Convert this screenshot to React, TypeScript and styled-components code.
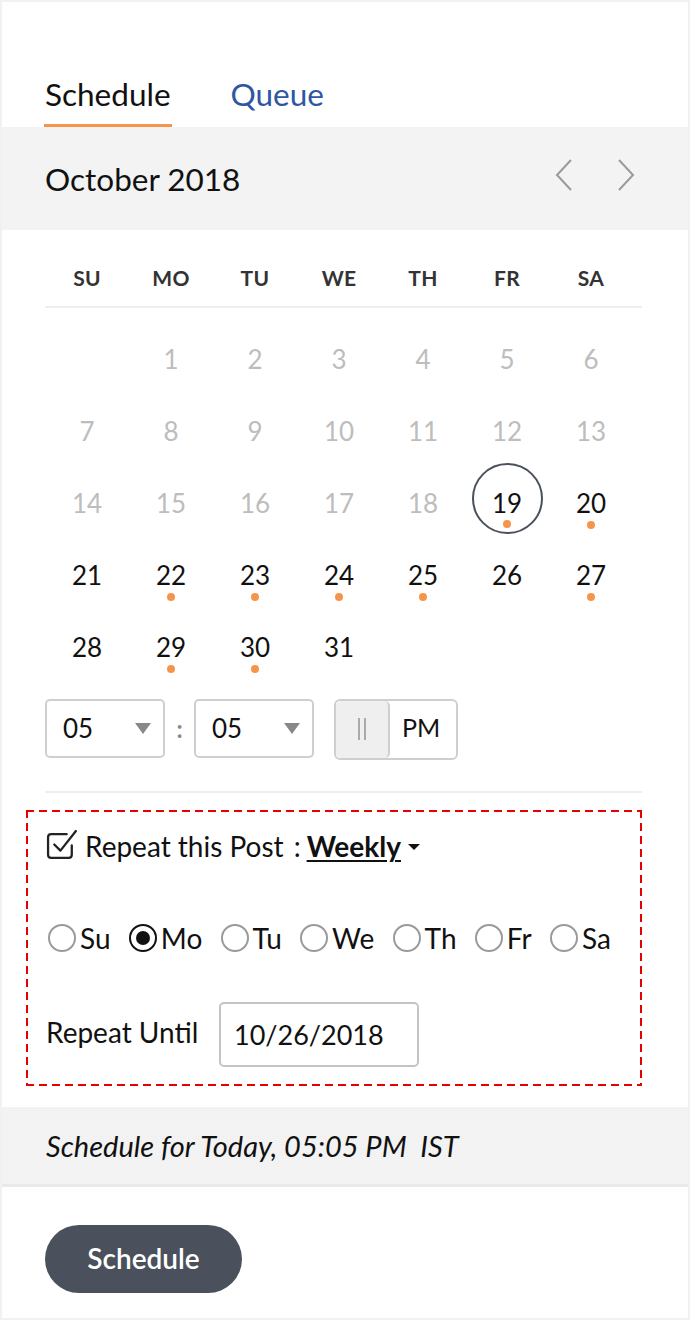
import React from "react";
import styled, { createGlobalStyle } from "styled-components";

const Global = createGlobalStyle`
  html, body { margin: 0; padding: 0; background: #fff; }
  body { font-family: Lato, "Open Sans", sans-serif; color: #111; }
  * { box-sizing: border-box; }
`;

const Frame = styled.div`
  width: 690px;
  height: 1320px;
  border: 2px solid #f1f1f1;
  background: #fff;
  display: flex;
  flex-direction: column;
`;

const Tabs = styled.div`
  display: flex;
  gap: 60px;
  padding: 74px 0 0 43px;
  height: 125px;
`;

const Tab = styled.div<{ $active?: boolean }>`
  font-size: 31.5px;
  line-height: 36px;
  color: ${(p) => (p.$active ? "#111" : "#2f56a3")};
  position: relative;
  height: 51px;
  &::after {
    content: "";
    display: ${(p) => (p.$active ? "block" : "none")};
    position: absolute;
    left: -1px;
    right: -1px;
    bottom: 0;
    height: 3px;
    background: #f4954b;
  }
`;

const MonthBar = styled.div`
  background: #f3f3f3;
  height: 103px;
  display: flex;
  align-items: center;
  justify-content: space-between;
  padding: 0 52px 0 43px;
`;

const MonthTitle = styled.div`
  font-size: 31.5px;
  color: #111;
`;

const Arrows = styled.div`
  display: flex;
  gap: 42px;
  align-items: center;
  padding-bottom: 8px;
`;

const Body = styled.div`
  padding: 0 46px 0 43px;
`;

const Grid = styled.div`
  display: grid;
  grid-template-columns: repeat(7, 84px);
`;

const HeadRow = styled(Grid)`
  height: 78px;
  align-items: end;
  padding-bottom: 16px;
  border-bottom: 2px solid #eeeeee;
  width: 597px;
`;

const HeadCell = styled.div`
  text-align: center;
  font-weight: 700;
  font-size: 21px;
  color: #333;
  letter-spacing: 0.3px;
`;

const DaysGrid = styled(Grid)`
  grid-auto-rows: 72px;
  padding-top: 16px;
`;

const DayCell = styled.div`
  display: flex;
  align-items: center;
  justify-content: center;
  position: relative;
`;

const DayNum = styled.div<{ $muted?: boolean; $today?: boolean }>`
  font-size: 26px;
  color: ${(p) => (p.$muted ? "#bdbdbd" : "#111")};
  width: 71px;
  height: 71px;
  border-radius: 50%;
  display: flex;
  align-items: center;
  justify-content: center;
  border: ${(p) => (p.$today ? "2px solid #4a505c" : "2px solid transparent")};
  position: relative;
  padding-bottom: 2px;
  margin-top: ${(p) => (p.$today ? "-12px" : "0")};
  ${(p) => (p.$today ? "& > span { margin-top: 12px; }" : "")}
`;

const Dot = styled.span<{ $today?: boolean }>`
  position: absolute;
  left: 50%;
  top: ${(p) => (p.$today ? "52px" : "53px")};
  width: 8px;
  height: 8px;
  margin-left: -4px;
  border-radius: 50%;
  background: #f4954b;
`;

const TimeRow = styled.div`
  display: flex;
  align-items: center;
  margin-top: 13px;
  height: 62px;
`;

const Select = styled.div`
  width: 120px;
  height: 59px;
  border: 2px solid #cfcfcf;
  border-radius: 5px;
  display: flex;
  align-items: center;
  justify-content: space-between;
  padding: 0 12px 0 16px;
  font-size: 26px;
  color: #111;
`;

const Caret = styled.span`
  width: 0;
  height: 0;
  border-left: 8px solid transparent;
  border-right: 8px solid transparent;
  border-top: 11px solid #888;
`;

const Colon = styled.span`
  width: 29px;
  text-align: center;
  font-size: 24px;
  color: #888;
  font-weight: 700;
`;

const Toggle = styled.div`
  margin-left: 20px;
  width: 124px;
  height: 61px;
  border: 2px solid #cfcfcf;
  border-radius: 6px;
  display: flex;
  overflow: hidden;
  margin-top: 2px;
`;

const Knob = styled.div`
  width: 54px;
  background: #efefef;
  border-right: 2px solid #cfcfcf;
  border-radius: 5px;
  display: flex;
  align-items: center;
  justify-content: center;
  gap: 4px;
  & > i {
    display: block;
    width: 2px;
    height: 22px;
    background: #aaa;
  }
`;

const PMLabel = styled.div`
  flex: 1;
  display: flex;
  align-items: center;
  justify-content: center;
  font-size: 25px;
  color: #111;
  padding: 0 4px 4px 0;
`;

const Divider = styled.div`
  height: 2px;
  background: #eeeeee;
  width: 597px;
  margin-top: 32px;
`;

const RepeatBox = styled.div`
  margin: 17px 0 0 -19px;
  width: 616px;
  height: 276px;
  padding: 18px 0 0 20px;
  display: flex;
  flex-direction: column;
  background-image:
    repeating-linear-gradient(90deg, #e60000 0 8px, transparent 8px 13px),
    repeating-linear-gradient(90deg, #e60000 0 8px, transparent 8px 13px),
    repeating-linear-gradient(180deg, #e60000 0 8px, transparent 8px 13px),
    repeating-linear-gradient(180deg, #e60000 0 8px, transparent 8px 13px);
  background-size: 100% 2px, 100% 2px, 2px 100%, 2px 100%;
  background-position: 0 0, 0 100%, 0 0, 100% 0;
  background-repeat: no-repeat;
`;

const RepeatHead = styled.div`
  display: flex;
  align-items: center;
  font-size: 28px;
  color: #111;
  height: 36px;
`;

const ColonText = styled.span`
  margin-left: 10px;
`;

const Weekly = styled.span`
  font-weight: 700;
  text-decoration: underline;
  text-underline-offset: 3px;
  text-decoration-thickness: 2px;
  margin-left: 6px;
`;

const SmallCaret = styled.span`
  width: 0;
  height: 0;
  border-left: 6px solid transparent;
  border-right: 6px solid transparent;
  border-top: 6px solid #111;
  margin-left: 7px;
  margin-top: 2px;
`;

const RadioRow = styled.div`
  display: flex;
  align-items: center;
  gap: 18.3px;
  margin-top: 56px;
  height: 36px;
  margin-left: 2px;
`;

const RadioItem = styled.label`
  display: flex;
  align-items: center;
  font-size: 28px;
  color: #111;
`;

const RadioCircle = styled.span<{ $on?: boolean }>`
  width: 28px;
  height: 28px;
  border-radius: 50%;
  border: 2px solid ${(p) => (p.$on ? "#111" : "#9a9a9a")};
  margin-right: 4px;
  display: flex;
  align-items: center;
  justify-content: center;
  &::after {
    content: "";
    display: ${(p) => (p.$on ? "block" : "none")};
    width: 14px;
    height: 14px;
    border-radius: 50%;
    background: #111;
  }
`;

const UntilRow = styled.div`
  display: flex;
  align-items: center;
  margin-top: 46px;
`;

const UntilLabel = styled.div`
  font-size: 28px;
  color: #111;
  width: 173px;
  padding-bottom: 6px;
`;

const DateInput = styled.div`
  width: 200px;
  height: 65px;
  border: 2px solid #c4c4c4;
  border-radius: 5px;
  display: flex;
  align-items: center;
  padding-left: 13px;
  font-size: 27px;
  color: #111;
`;

const Summary = styled.div`
  margin-top: 21px;
  height: 80px;
  background: repeating-linear-gradient(0deg, #f4f4f4 0px, #f4f4f4 1px, #f1f1f1 1px, #f1f1f1 2px);
  border-bottom: 3px solid #e9e9e9;
  display: flex;
  align-items: center;
  padding-left: 44px;
  font-style: italic;
  font-size: 29px;
  color: #111;
  white-space: pre;
`;

const Footer = styled.div`
  padding: 38px 0 0 43px;
`;

const Button = styled.button`
  width: 197px;
  height: 68px;
  border-radius: 34px;
  border: 0;
  background: #4a515c;
  color: #fff;
  font-family: Lato, "Open Sans", sans-serif;
  font-size: 28px;
  font-weight: 600;
  padding-bottom: 3px;
`;

const days = ["SU", "MO", "TU", "WE", "TH", "FR", "SA"];
const dotted = new Set([19, 20, 22, 23, 24, 25, 27, 29, 30]);

const Chevron = ({ dir }: { dir: "l" | "r" }) => (
  <svg width="20" height="34" viewBox="0 0 20 34">
    <path
      d={dir === "l" ? "M17 2 L3 17 L17 32" : "M3 2 L17 17 L3 32"}
      fill="none"
      stroke="#9a9a9a"
      strokeWidth="2"
    />
  </svg>
);

const CheckIcon = () => (
  <svg width="33" height="33" viewBox="0 0 32 32" style={{ marginRight: 6, marginTop: -2 }}>
    <path
      d="M25 16 V25 Q25 28 22 28 H5 Q2 28 2 25 V8 Q2 5 5 5 H20"
      fill="none"
      stroke="#222"
      strokeWidth="2.2"
      strokeLinecap="round"
    />
    <path d="M8 15 L14 21 L29 2" fill="none" stroke="#222" strokeWidth="2.2" strokeLinecap="round" strokeLinejoin="round" />
  </svg>
);

const radios: { label: string; on?: boolean }[] = [
  { label: "Su" },
  { label: "Mo", on: true },
  { label: "Tu" },
  { label: "We" },
  { label: "Th" },
  { label: "Fr" },
  { label: "Sa" },
];

export default function App() {
  const cells: React.ReactNode[] = [];
  cells.push(<DayCell key="blank" />);
  for (let d = 1; d <= 31; d++) {
    const today = d === 19;
    cells.push(
      <DayCell key={d}>
        <DayNum $muted={d < 19} $today={today}>
          <span>{d}</span>
        </DayNum>
        {dotted.has(d) && <Dot $today={today} />}
      </DayCell>
    );
  }
  return (
    <>
      <Global />
      <Frame>
        <Tabs>
          <Tab $active>Schedule</Tab>
          <Tab>Queue</Tab>
        </Tabs>
        <MonthBar>
          <MonthTitle>October 2018</MonthTitle>
          <Arrows>
            <Chevron dir="l" />
            <Chevron dir="r" />
          </Arrows>
        </MonthBar>
        <Body>
          <HeadRow>
            {days.map((d) => (
              <HeadCell key={d}>{d}</HeadCell>
            ))}
          </HeadRow>
          <DaysGrid>{cells}</DaysGrid>
          <TimeRow>
            <Select>
              05 <Caret />
            </Select>
            <Colon>:</Colon>
            <Select>
              05 <Caret />
            </Select>
            <Toggle>
              <Knob>
                <i />
                <i />
              </Knob>
              <PMLabel>PM</PMLabel>
            </Toggle>
          </TimeRow>
          <Divider />
          <RepeatBox>
            <RepeatHead>
              <CheckIcon />
              Repeat this Post
              <ColonText>:</ColonText>
              <Weekly>Weekly</Weekly>
              <SmallCaret />
            </RepeatHead>
            <RadioRow>
              {radios.map((r) => (
                <RadioItem key={r.label}>
                  <RadioCircle $on={r.on} />
                  {r.label}
                </RadioItem>
              ))}
            </RadioRow>
            <UntilRow>
              <UntilLabel>Repeat Until</UntilLabel>
              <DateInput>10/26/2018</DateInput>
            </UntilRow>
          </RepeatBox>
        </Body>
        <Summary>{"Schedule for Today, 05:05 PM  IST"}</Summary>
        <Footer>
          <Button>Schedule</Button>
        </Footer>
      </Frame>
    </>
  );
}
